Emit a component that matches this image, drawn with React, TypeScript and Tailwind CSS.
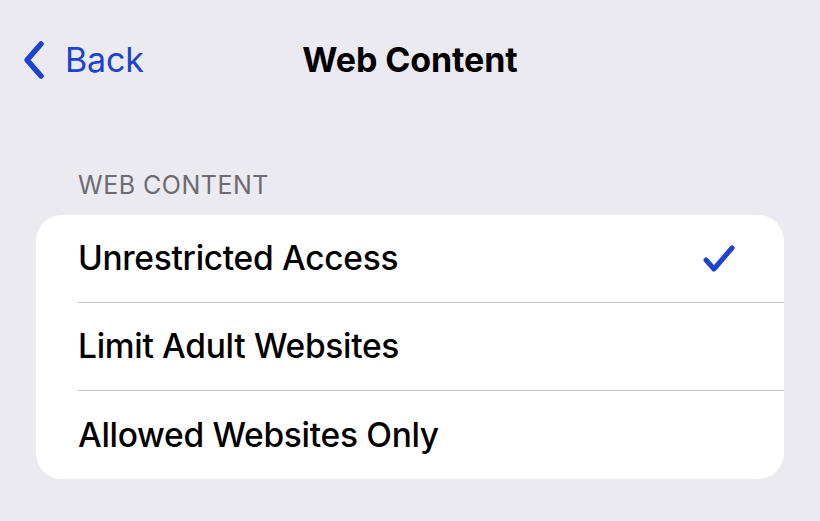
import React from "react";

const options = ["Unrestricted Access", "Limit Adult Websites", "Allowed Websites Only"];

export default function App() {
  const selected = 0;

  return (
    <main
      className="h-[521px] w-[820px] overflow-hidden bg-[#ebeaf0] text-black"
      style={{ fontFamily: "Inter, 'Liberation Sans', sans-serif" }}
    >
      <div className="relative flex h-[120px] items-center justify-center">
        <button className="absolute left-[22px] top-[40px] flex items-center gap-[19px] text-[#1c42d2]">
          <svg width="24" height="40" viewBox="0 0 24 40" fill="none">
            <path
              d="M19 4 L5 20 L19 36"
              stroke="currentColor"
              strokeWidth="5.5"
              strokeLinecap="round"
              strokeLinejoin="round"
            />
          </svg>
          <span className="text-[34px] leading-none tracking-[-0.2px]">Back</span>
        </button>
        <h1 className="text-[34px] font-bold leading-none tracking-[-0.1px]">Web Content</h1>
      </div>

      <div className="px-[36px]">
        <p className="mb-[17px] mt-[53px] pl-[42px] text-[25px] leading-none tracking-[0.5px] text-[#6c6b71]">
          WEB CONTENT
        </p>
        <div className="overflow-hidden rounded-[26px] bg-white">
          {options.map((o, i) => (
            <div key={o} className="pl-[42px]">
              <div
                className={
                  "flex h-[88px] items-center justify-between pr-[48px] " +
                  (i < options.length - 1 ? "border-b border-[#c6c6c8]" : "")
                }
              >
                <span className="text-[33.5px] font-medium tracking-[-0.3px]">{o}</span>
                {i === selected && (
                  <svg width="34" height="30" viewBox="0 0 34 30" fill="none" className="text-[#1c42d2]">
                    <path
                      d="M4 16 L12 25 L30 4"
                      stroke="currentColor"
                      strokeWidth="5"
                      strokeLinecap="round"
                      strokeLinejoin="round"
                    />
                  </svg>
                )}
              </div>
            </div>
          ))}
        </div>
      </div>
    </main>
  );
}
